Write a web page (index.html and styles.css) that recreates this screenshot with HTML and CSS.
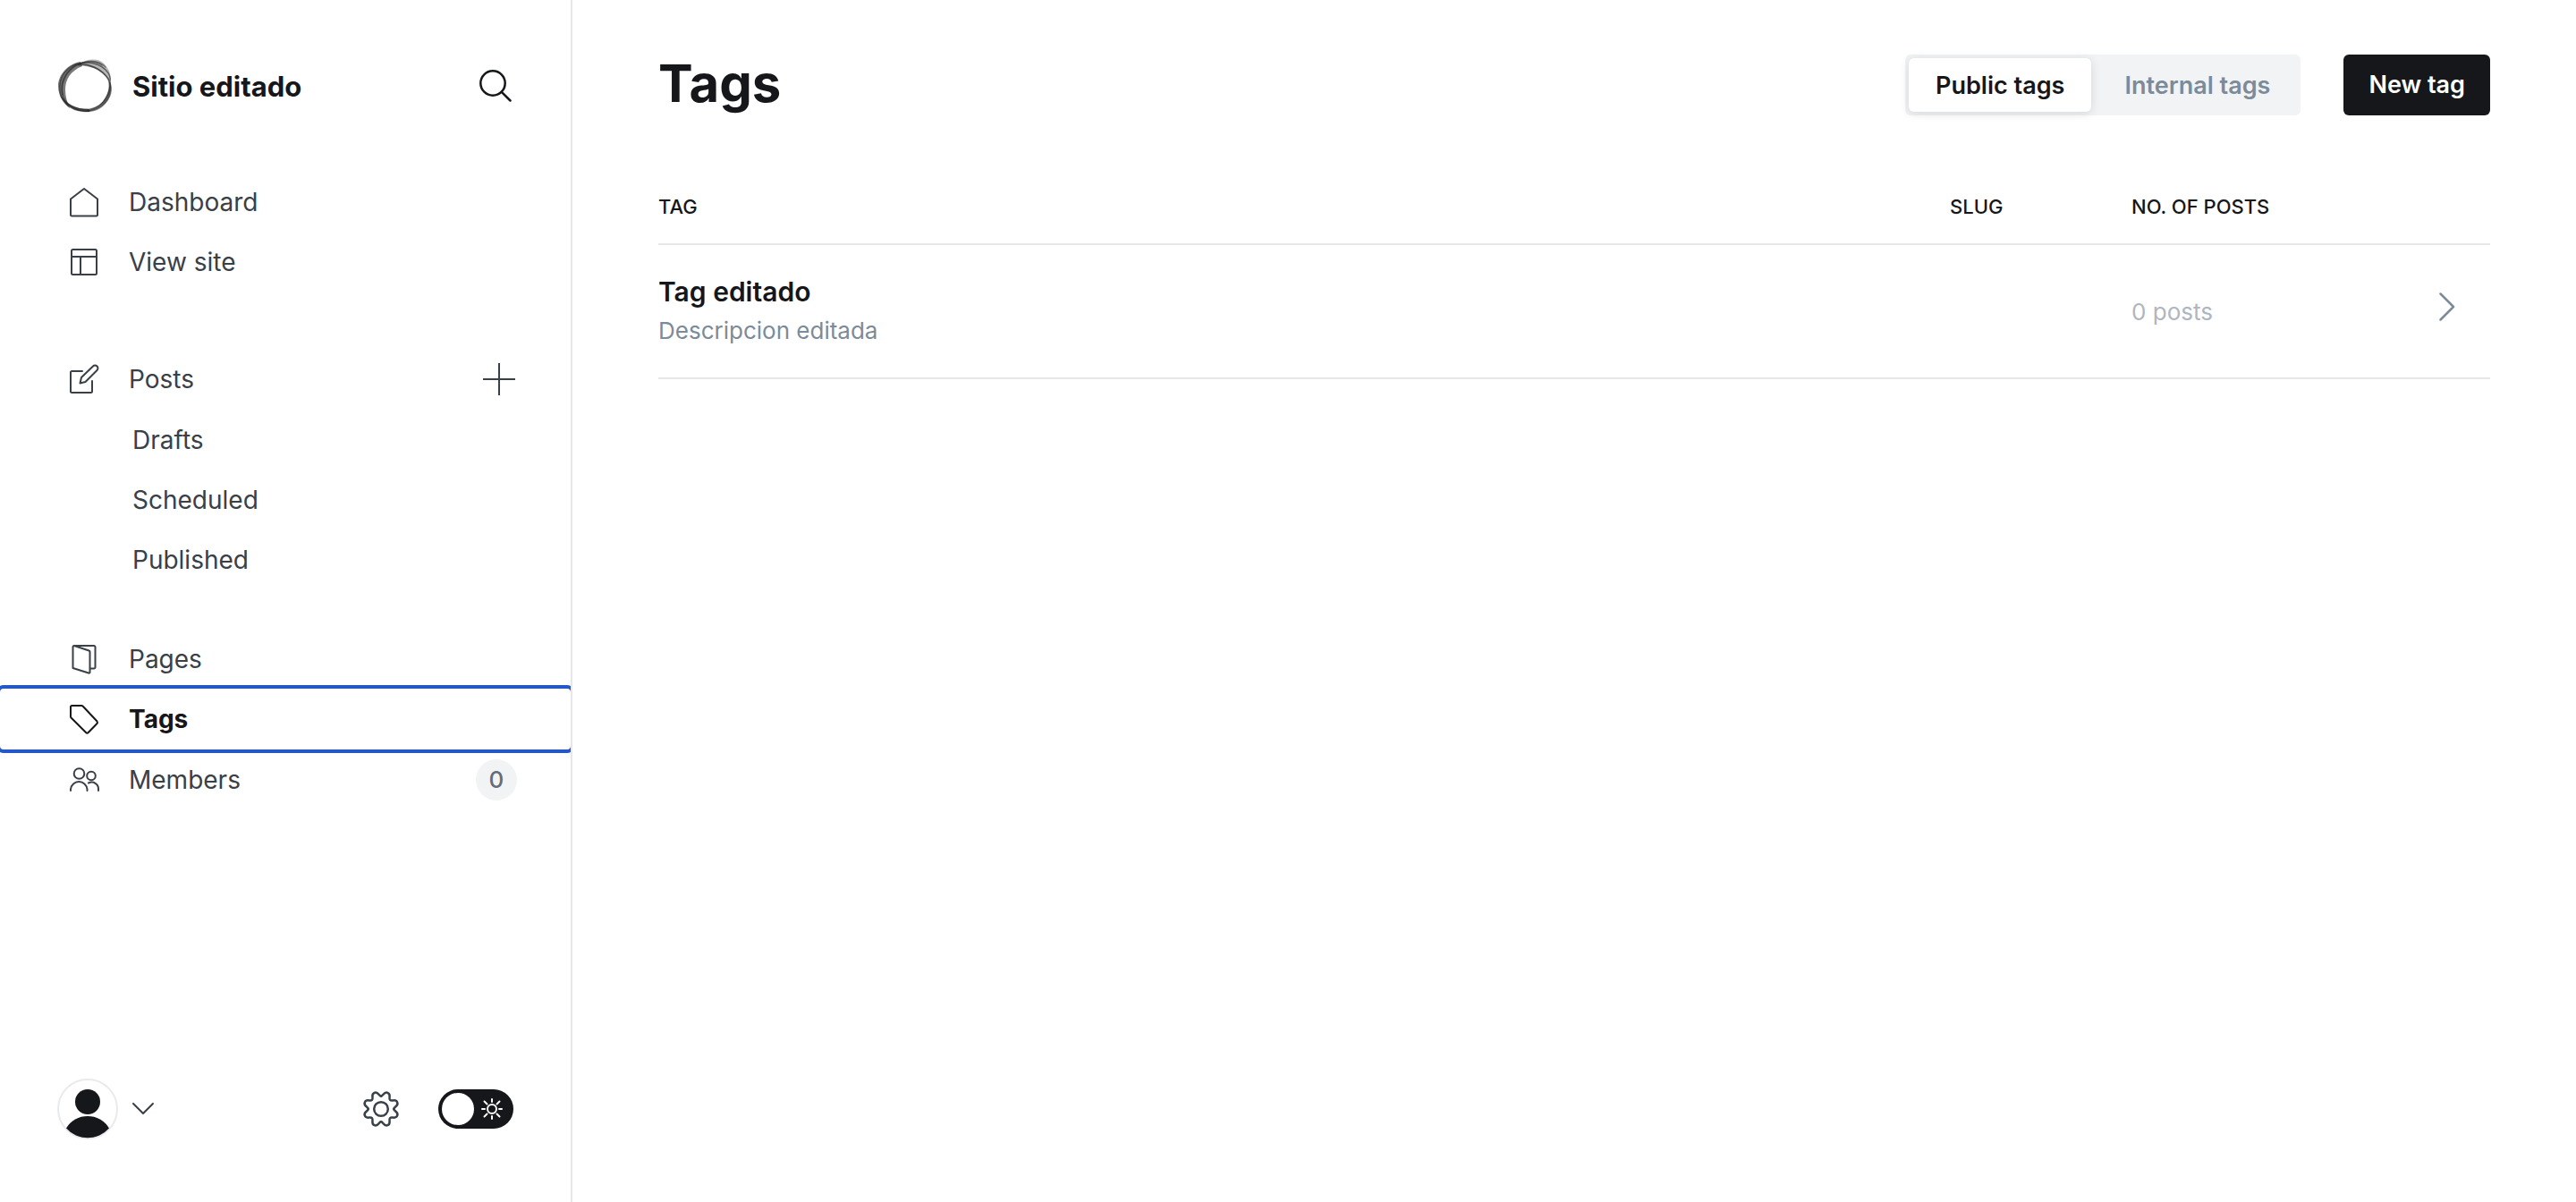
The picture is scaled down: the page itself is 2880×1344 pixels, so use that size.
FILE: index.html
```html
<!DOCTYPE html>
<html lang="es">
<head>
<meta charset="utf-8">
<title>Tags - Sitio editado</title>
<meta name="viewport" content="width=device-width, initial-scale=1">
<link rel="stylesheet" href="styles.css">
</head>
<body>
<div class="app">
  <aside class="sidebar">
    <header class="site">
      <svg class="site-logo" viewBox="0 0 64 64" aria-hidden="true">
        <g fill="#222" stroke="none">
          <path d="M26 5C12 7 1 20 1 32C1 44 8 53 14 57C11 50 9 44 9 36C9 25 15 15 28 10Z" opacity=".6"/>
          <path d="M24 8C34 1 46 1 52 7C58 13 61 20 59 27C54 18 47 13 36 11C31 10 27 9 24 8Z" opacity=".32"/>
          <path d="M59 27C63 35 61 46 52 54C46 60 38 62 28 61C42 58 49 54 53 46C57 40 58 34 59 27Z" opacity=".5"/>
          <path d="M4 42C8 54 20 62 36 61L36 58C20 58 10 52 4 42Z" opacity=".8"/>
        </g>
        <g fill="none" stroke="#222" stroke-width="1.500">
          <path d="M20 8C34 6 50 12 58 26C61 34 60 46 50 54C40 62 20 63 10 52C0 42 0 24 12 13C24 3 44 4 54 14C58 18 60 22 59 27" opacity=".6"/>
          <path d="M24 9C34 7 48 12 57 24C60 34 58 46 47 54C38 60 20 60 12 52C2 42 4 26 14 15C24 4 44 0 54 11" opacity=".45"/>
          <path d="M6 42C2 28 10 12 26 7C34 4 44 4 50 9M59 28C60 40 54 54 36 59" opacity=".5"/>
        </g>
      </svg>
      <span class="site-name">Sitio editado</span>
      <button class="icon-button" type="button" aria-label="Search">
        <svg class="icon-search" viewBox="0 0 36 36"><circle cx="15" cy="15" r="13.700"/><path d="M24.800 24.800 34.500 34.500"/></svg>
      </button>
    </header>

    <nav class="nav" aria-label="Main">
      <ul class="nav-group">
        <li><a class="nav-link" href="#dashboard">
          <svg class="icon" viewBox="0 0 34 34"><path d="M2 13.500 17 2l15 11.500V31a1.500 1.500 0 0 1-1.500 1.500h-27A1.500 1.500 0 0 1 2 31z"/></svg>Dashboard</a></li>
        <li><a class="nav-link" href="#site">
          <svg class="icon" viewBox="0 0 34 34"><rect x="3" y="3" width="28" height="28" rx="1.500"/><path d="M3 11h28M13 11v20"/></svg>View site</a></li>
      </ul>
      <ul class="nav-group">
        <li class="nav-row"><a class="nav-link" href="#posts">
          <svg class="icon" viewBox="0 0 34 34"><path d="M15 8H3.500A1.500 1.500 0 0 0 2 9.500v21A1.500 1.500 0 0 0 3.500 32h21a1.500 1.500 0 0 0 1.500-1.500V19M12.500 21.500l1.500-6.500L27 2.500a3 3 0 0 1 4.500 4.500L18.500 20z"/></svg>Posts</a>
          <button class="icon-button nav-add" type="button" aria-label="New post"><svg class="icon-add" viewBox="0 0 36 36"><path d="M18 0v36M0 18h36"/></svg></button></li>
        <li><a class="nav-link nav-sub" href="#drafts">Drafts</a></li>
        <li><a class="nav-link nav-sub" href="#scheduled">Scheduled</a></li>
        <li><a class="nav-link nav-sub" href="#published">Published</a></li>
      </ul>
      <ul class="nav-group nav-group-near">
        <li><a class="nav-link" href="#pages">
          <svg class="icon" viewBox="0 0 34 34"><path d="M6 2h22a1.500 1.500 0 0 1 1.500 1.500V26a1.500 1.500 0 0 1-1.500 1.500h-4.500M4.500 3.500v23.500l17.500 5.500a1 1 0 0 0 1.500-1V9a1.500 1.500 0 0 0-1-1.500L6 2a1.500 1.500 0 0 0-1.500 1.500z"/></svg>Pages</a></li>
        <li><a class="nav-link is-active" href="#tags" aria-current="page">
          <svg class="icon" viewBox="0 0 34 34"><path d="M3.500 2H14a2 2 0 0 1 1.500.5L31.500 19.500a2 2 0 0 1 0 2.500L21.500 32.200a1.500 1.500 0 0 1-2.200 0L2.500 15.500A2 2 0 0 1 2 14V3.500A1.500 1.500 0 0 1 3.500 2z"/></svg>Tags</a></li>
        <li><a class="nav-link" href="#members">
          <svg class="icon" viewBox="0 0 34 34"><circle cx="11.500" cy="10" r="5.800"/><circle cx="25" cy="12.500" r="4.800"/><path d="M2 29v-1.500a9.300 9.500 0 0 1 18.500 0V29M22 20.500a7.500 7.500 0 0 1 11 7V29"/></svg>Members<span class="badge">0</span></a></li>
      </ul>
    </nav>

    <footer class="account">
      <button class="account-menu" type="button" aria-label="Account">
        <svg class="avatar" viewBox="0 0 68 68"><circle cx="34" cy="34" r="33" fill="#fff" stroke="#e8eaed" stroke-width="2"/><g fill="#15171a" stroke="none"><circle cx="34" cy="26" r="14"/><path d="M10 55.500a28 28 0 0 1 48 0 32 32 0 0 1-48 0z"/></g></svg>
        <svg class="icon-caret" viewBox="0 0 24 14"><path d="M1 1l11 11L23 1"/></svg>
      </button>
      <a class="settings" href="#settings" aria-label="Settings">
        <svg class="icon-gear" viewBox="-20 -20 40 40"><circle r="7.800"/>
          <path id="gear-quarter" d="M0-14.300C2.500-14.300 3.200-19.900 7.400-18.200C11.900-16.400 8-12 10.100-10.100C12-8 16.400-11.900 18.200-7.400C19.900-3.200 14.300-2.500 14.300 0"/>
          <use href="#gear-quarter" transform="rotate(90)"/><use href="#gear-quarter" transform="rotate(180)"/><use href="#gear-quarter" transform="rotate(270)"/></svg>
      </a>
      <label class="theme"><input class="theme-input" type="checkbox" aria-label="Night mode">
        <svg class="icon-sun" viewBox="0 0 24 24"><circle cx="12" cy="12" r="5"/><path d="M12 1v3M12 20v3M1 12h3M20 12h3M3.500 3.500l3 3M17.500 17.500l3 3M3.500 20.500l3-3M17.500 6.500l3-3"/></svg></label>
    </footer>
  </aside>

  <main class="content">
    <header class="page-head">
      <h1 class="page-title">Tags</h1>
      <div class="segmented">
        <button class="segment is-selected" type="button">Public tags</button>
        <button class="segment" type="button">Internal tags</button>
      </div>
      <a class="button-primary" href="#new">New tag</a>
    </header>
    <table class="tags">
      <thead>
        <tr><th class="col-tag" scope="col">TAG</th><th class="col-slug" scope="col">SLUG</th><th class="col-count" scope="col">NO. OF POSTS</th><th class="col-open"></th></tr>
      </thead>
      <tbody>
        <tr>
          <td><a class="tag-name" href="#tag">Tag editado</a><p class="tag-desc">Descripcion editada</p></td>
          <td></td>
          <td class="tag-count">0 posts</td>
          <td><a class="open-link" href="#tag" aria-label="Open tag"><svg class="icon-open" viewBox="0 0 18 32"><path d="M1.500 1.500 16 16 1.500 30.500"/></svg></a></td>
        </tr>
      </tbody>
    </table>
  </main>
</div>
</body>
</html>
```
FILE: styles.css
```css
*, *::before, *::after { box-sizing: border-box; }
body {
  margin: 0;
  background: #fff;
  color: #15171a;
  font-family: Inter, "Liberation Sans", sans-serif;
  font-size: 28px;
}
a { color: inherit; text-decoration: none; }
button { margin: 0; padding: 0; border: 0; background: none; color: inherit; font: inherit; cursor: pointer; }
svg { display: block; fill: none; stroke: currentColor; stroke-width: 2; stroke-linecap: round; stroke-linejoin: round; flex: none; }
ul { list-style: none; margin: 0; padding: 0; }

.app { display: grid; grid-template-columns: 640px 1fr; min-height: 100vh; }

.sidebar { display: flex; flex-direction: column; border-right: 2px solid #e7e7e9; }
.site { display: flex; align-items: center; gap: 20px; padding: 64px 66px 0 64px; }
.site-logo { width: 64px; height: 64px; }
.site-name { flex: 1; padding-top: 2px; font-size: 31px; font-weight: 700; line-height: 36px; }
.icon-search { width: 36px; height: 36px; stroke-width: 2.5; }

.nav { flex: 1; padding-top: 64px; color: #394047; overflow-x: clip; }
.nav-group { margin-bottom: 64px; }
.nav-group-near { margin-top: -20px; }
.nav-link { display: flex; align-items: center; gap: 33px; height: 67px; padding: 0 60px 0 77px; flex: 1; }
.nav-sub { padding-left: 148px; }
.nav-row { display: flex; align-items: center; height: 68px; }
.nav-add { padding-right: 62px; }
.icon { width: 34px; height: 34px; }
.icon-add { width: 36px; height: 36px; stroke-linecap: butt; }
.is-active { height: 68px; color: #15171a; font-weight: 700; border-radius: 4px; outline: 4px solid #2458c6; }
.badge { margin-left: auto; width: 46px; border-radius: 23px; background: #f1f3f4; color: #626d79; font-size: 26px; font-weight: 500; line-height: 46px; text-align: center; }

.account { display: flex; align-items: center; gap: 44px; padding: 0 64px 70px; color: #394047; }
.account-menu { display: flex; align-items: center; gap: 16px; margin-right: auto; }
.avatar { width: 68px; height: 68px; }
.icon-caret { width: 24px; height: 14px; }
.icon-gear { width: 40px; height: 40px; stroke-width: 2.5; overflow: visible; }
.theme { display: grid; align-items: center; color: #fff; }
.theme-input { appearance: none; grid-area: 1 / 1; width: 84px; height: 44px; margin: 0; padding: 4px; border-radius: 22px; background: #15171a; }
.theme-input::before { content: ""; display: block; width: 36px; height: 36px; border-radius: 50%; background: #fff; }
.icon-sun { grid-area: 1 / 1; width: 24px; height: 24px; margin-left: 48px; }

.content { padding: 61px 96px 96px; }
.page-head { display: flex; align-items: center; height: 68px; }
.page-title { flex: 1; margin: 0; padding-bottom: 4px; font-size: 58px; font-weight: 700; line-height: 64px; }
.segmented { display: flex; gap: 7px; padding: 4px; border-radius: 6px; background: #f1f3f4; }
.segment { height: 60px; padding: 0 30px; border-radius: 6px; color: #7c8b9a; font-size: 27px; font-weight: 600; }
.is-selected { background: #fff; color: #15171a; box-shadow: 0 2px 12px rgba(0, 0, 0, .12); }
.button-primary { margin-left: 48px; padding: 0 28px; border-radius: 6px; background: #15171a; color: #fff; font-size: 27px; font-weight: 600; line-height: 68px; }

.tags { width: 100%; margin-top: 60px; border-collapse: collapse; table-layout: fixed; text-align: left; }
.tags th { height: 84px; padding: 0; border-bottom: 2px solid #e7e7e9; font-size: 22px; font-weight: 500; }
.tags td { height: 150px; padding: 0; border-bottom: 2px solid #e7e7e9; }
.col-slug { width: 203px; }
.col-count { width: 302px; }
.col-open { width: 99px; }
.tag-name { font-size: 30px; font-weight: 600; line-height: 44px; }
.tag-desc { margin: 0; color: #7c8b9a; font-size: 26px; line-height: 44px; }
.tag-count { color: #aeb7c1; font-size: 26px; }
.open-link { display: block; padding: 0 0 10px 42px; color: #7c8b9a; }
.icon-open { width: 18px; height: 32px; stroke-width: 2.5; }
```
